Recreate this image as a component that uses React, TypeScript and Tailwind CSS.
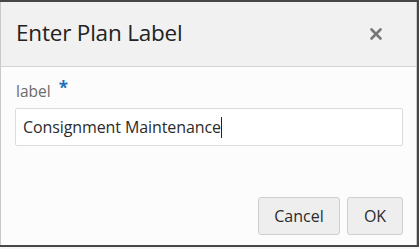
import { X } from "lucide-react";

const font = { fontFamily: '"Open Sans", "Noto Sans", sans-serif' };

export default function App() {
  return (
    <div
      className="w-[419px] h-[249px] overflow-hidden bg-[#474747] flex flex-col"
      style={font}
    >
      <div className="mt-[2px] w-[417px] h-[243px] shrink-0 bg-[#fcfcfc] border-l border-r border-[#c9c9c9] flex flex-col">
        <div className="h-[65px] shrink-0 bg-[#f1f1f1] border-b border-[#d4d4d4] flex items-center justify-between pl-[15px] pr-[31px]">
          <h1 className="text-[22.5px] text-[#222] tracking-[-0.2px] pb-[2px]">Enter Plan Label</h1>
          <X className="w-[18px] h-[18px] text-[#777]" strokeWidth={3.5} />
        </div>
        <div className="px-[14px] pt-[14px]">
          <div className="flex items-start gap-[8px] pl-[1px]">
            <span className="text-[15.5px] text-[#6b6b6b] leading-[20px]">label</span>
            <span className="text-[17px] text-[#1e6fb5] leading-[14px] font-bold">*</span>
          </div>
          <div className="mt-[7px] h-[38px] w-[388px] border border-[#dcdcdc] rounded-[2px] bg-white flex items-center pl-[7px]">
            <span className="text-[16px] text-[#2b2b2b] tracking-[-0.1px]">Consignment Maintenance</span>
            <span className="w-px h-[21px] bg-[#222]" />
          </div>
        </div>
        <div className="mt-auto mb-[10px] flex justify-end gap-[7px] pr-[13px]">
          <button className="h-[38px] w-[82px] bg-[#eeeeee] border border-[#cfcfcf] rounded-[3px] text-[16px] text-[#2b2b2b]">
            Cancel
          </button>
          <button className="h-[38px] w-[56px] bg-[#eeeeee] border border-[#cfcfcf] rounded-[3px] text-[16px] text-[#2b2b2b]">
            OK
          </button>
        </div>
      </div>
      <div className="mt-[2px] h-[2px] bg-[#f5f5f5] overflow-hidden">
        <div className="pl-[42px] text-[15px] leading-[14px] text-[#333] whitespace-nowrap">
          Select the Items Check All Selected Label the Grouped Label
        </div>
      </div>
    </div>
  );
}
